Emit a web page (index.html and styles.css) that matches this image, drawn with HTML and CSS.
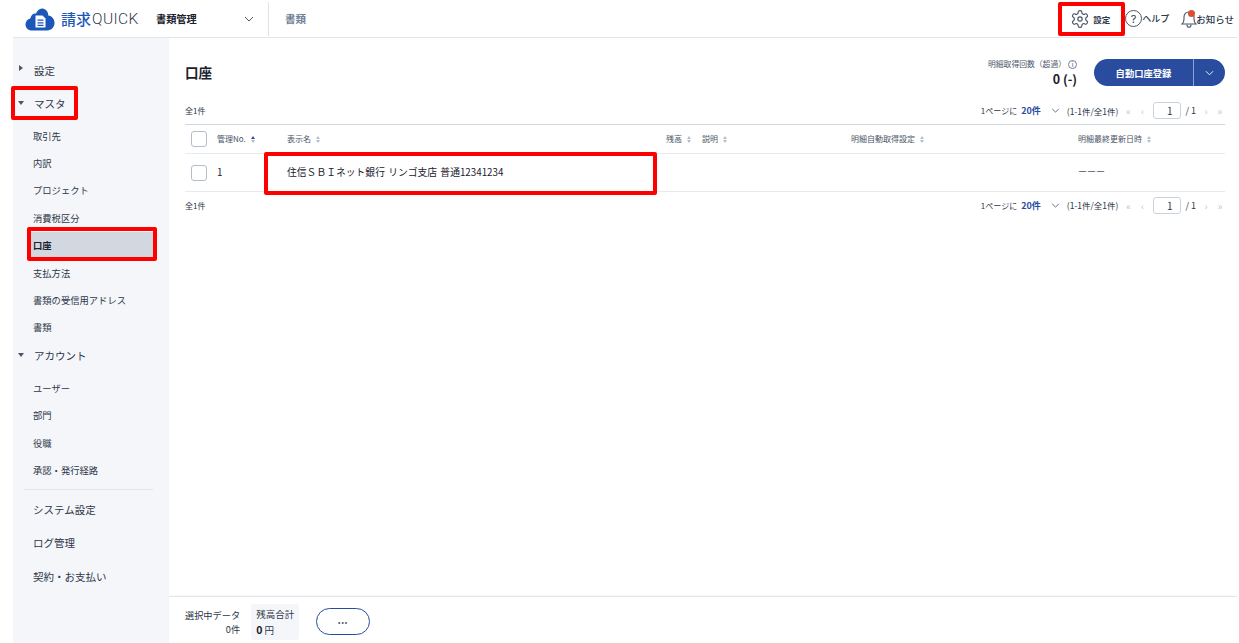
FILE: index.html
```html
<!DOCTYPE html>
<html lang="ja">
<head>
<meta charset="utf-8">
<title>口座</title>
<link rel="stylesheet" href="styles.css">
</head>
<body>
<div class="app">
  <header class="header">
    <div class="logo">
      <svg class="logo-mark" width="30" height="23" viewBox="0 0 30 23"><path fill="#1b57b8" d="M7 22.500C3 22.500 .5 19.800 .5 16.500c0-3 2-5.400 4.800-6C6 7 8.500 5 11 5.500 12.500 2.300 15-.2 18.500 .8c3.200.8 4.800 3.500 4.800 6.700 3.700.5 6.200 3.500 6.200 7.300 0 4.300-3 7.700-7.500 7.700z"/><path fill="#fff" d="M10.500 7.500h7l3 3v9h-10z"/><path fill="#1b57b8" d="M12.500 11.500h6v1.300h-6zM12.500 14.200h6v1.300h-6zM12.500 16.800h6v1.300h-6z"/></svg>
      <span class="logo-ja">請求</span><span class="logo-en">QUICK</span>
    </div>
    <div class="app-switch">
      <span class="app-name">書類管理</span>
      <svg class="chev" width="10" height="6" viewBox="0 0 10 6"><path d="M1 1l4 4 4-4" fill="none" stroke="#4a5568" stroke-width="1"/></svg>
    </div>
    <div class="crumb">書類</div>
    <nav class="top-actions">
      <div class="top-item top-gear">
        <svg width="20" height="20" viewBox="0 0 24 24" fill="none" stroke="#4a5568" stroke-width="1.400"><path d="M12.220 2h-.44a2 2 0 0 0-2 2v.18a2 2 0 0 1-1 1.730l-.43.25a2 2 0 0 1-2 0l-.15-.08a2 2 0 0 0-2.730.73l-.22.38a2 2 0 0 0 .73 2.730l.15.1a2 2 0 0 1 1 1.720v.51a2 2 0 0 1-1 1.740l-.15.09a2 2 0 0 0-.73 2.730l.22.38a2 2 0 0 0 2.730.73l.15-.08a2 2 0 0 1 2 0l.43.25a2 2 0 0 1 1 1.730V20a2 2 0 0 0 2 2h.44a2 2 0 0 0 2-2v-.18a2 2 0 0 1 1-1.730l.43-.25a2 2 0 0 1 2 0l.15.08a2 2 0 0 0 2.730-.73l.22-.39a2 2 0 0 0-.73-2.730l-.15-.08a2 2 0 0 1-1-1.740v-.5a2 2 0 0 1 1-1.740l.15-.09a2 2 0 0 0 .73-2.730l-.22-.38a2 2 0 0 0-2.730-.73l-.15.08a2 2 0 0 1-2 0l-.43-.25a2 2 0 0 1-1-1.730V4a2 2 0 0 0-2-2z"/><circle cx="12" cy="12" r="2.600"/></svg>
        <span>設定</span>
      </div>
      <div class="top-item top-help">
        <span class="help-icon">?</span><span>ヘルプ</span>
      </div>
      <div class="top-item top-bell">
        <span class="bell-wrap">
          <svg width="16" height="18" viewBox="0 0 16 18" fill="none" stroke="#4a5568" stroke-width="1.100"><path d="M1 14c1.500-1 2-2.500 2-5V7c0-3 2-5 5-5s5 2 5 5v2c0 2.500.5 4 2 5z"/><path d="M6 14.500c0 2 1 2.800 2 2.800s2-.8 2-2.800"/></svg>
          <i class="bell-dot"></i>
        </span>
        <span class="bell-label">お知らせ</span>
      </div>
    </nav>
  </header>
  <div class="body">
    <aside class="sidebar">
      <div class="side-top side-setting"><span class="tri tri-r"></span>設定</div>
      <div class="side-top side-master"><span class="tri tri-d"></span>マスタ</div>
      <ul class="side-sub">
        <li>取引先</li><li>内訳</li><li>プロジェクト</li><li>消費税区分</li>
        <li class="active">口座</li><li>支払方法</li><li>書類の受信用アドレス</li><li>書類</li>
      </ul>
      <div class="side-top side-account"><span class="tri tri-d"></span>アカウント</div>
      <ul class="side-sub side-sub2">
        <li>ユーザー</li><li>部門</li><li>役職</li><li>承認・発行経路</li>
      </ul>
      <div class="side-div"></div>
      <div class="side-link">システム設定</div>
      <div class="side-link">ログ管理</div>
      <div class="side-link">契約・お支払い</div>
    </aside>
    <main class="main">
      <div class="content">
        <div class="title-row">
          <h1>口座</h1>
          <div class="quota">
            <div class="quota-label">明細取得回数（超過）<span class="info">i</span></div>
            <div class="quota-val">0 (-)</div>
          </div>
          <div class="split-btn">
            <span class="split-main">自動口座登録</span>
            <span class="split-arrow"><svg width="9" height="6" viewBox="0 0 10 6"><path d="M1 1l4 4 4-4" fill="none" stroke="#fff" stroke-width="1"/></svg></span>
          </div>
        </div>
        <div class="pager-row">
          <span class="count">全1件</span>
          <div class="pager">
            <span>1ページに</span><b>20件</b>
            <svg class="pg-chev" width="9" height="5" viewBox="0 0 10 6"><path d="M1 1l4 4 4-4" fill="none" stroke="#4a5568" stroke-width="1"/></svg>
            <span class="pg-range">(1-1件/全1件)</span>
            <span class="pg-nav pg-first">«</span><span class="pg-nav">‹</span>
            <span class="pg-input">1</span><span class="pg-total">/ 1</span>
            <span class="pg-nav">›</span><span class="pg-nav">»</span>
          </div>
        </div>
        <div class="table">
          <div class="tr th">
            <div class="c-check"><span class="check"></span></div>
            <div class="c-no">管理No.<span class="sort sort-on"></span></div>
            <div class="c-name">表示名<span class="sort"></span></div>
            <div class="c-bal">残高<span class="sort"></span></div>
            <div class="c-desc">説明<span class="sort"></span></div>
            <div class="c-auto">明細自動取得設定<span class="sort"></span></div>
            <div class="c-date">明細最終更新日時<span class="sort"></span></div>
          </div>
          <div class="tr td">
            <div class="c-check"><span class="check"></span></div>
            <div class="c-no">1</div>
            <div class="c-name">住信ＳＢＩネット銀行 リンゴ支店 普通12341234</div>
            <div class="c-bal"></div>
            <div class="c-desc"></div>
            <div class="c-auto"></div>
            <div class="c-date">ーーー</div>
          </div>
        </div>
        <div class="pager-row pager-bottom">
          <span class="count">全1件</span>
          <div class="pager">
            <span>1ページに</span><b>20件</b>
            <svg class="pg-chev" width="9" height="5" viewBox="0 0 10 6"><path d="M1 1l4 4 4-4" fill="none" stroke="#4a5568" stroke-width="1"/></svg>
            <span class="pg-range">(1-1件/全1件)</span>
            <span class="pg-nav pg-first">«</span><span class="pg-nav">‹</span>
            <span class="pg-input">1</span><span class="pg-total">/ 1</span>
            <span class="pg-nav">›</span><span class="pg-nav">»</span>
          </div>
        </div>
      </div>
      <footer class="footer">
        <div class="sel">
          <div>選択中データ</div>
          <div>0件</div>
        </div>
        <div class="total">
          <div>残高合計</div>
          <div><b>0</b> 円</div>
        </div>
        <div class="more">•••</div>
      </footer>
    </main>
  </div>
</div>
<div class="mark mark-gear"></div>
<div class="mark mark-master"></div>
<div class="mark mark-acct"></div>
<div class="mark mark-row"></div>
</body>
</html>
```
FILE: styles.css
```css
* { box-sizing: border-box; }
html, body { margin: 0; height: 100%; background: #fff; overflow: hidden; }
body { font-family: "Noto Sans CJK JP", "Noto Sans", sans-serif; color: #2d3748; position: relative; }
ul { list-style: none; margin: 0; padding: 0; }
h1 { margin: 0; }

.app { width: 1237px; height: 643px; display: flex; flex-direction: column; }

.header { height: 38px; margin-left: 13px; border-bottom: 1px solid #e2e5ec; display: flex; align-items: center; flex: none; }
.logo { display: flex; align-items: center; width: 143px; padding-left: 12px; height: 37px; }
.logo-mark { flex: none; margin-top: 1px; }
.logo-ja { font-size: 15px; color: #1b57b8; margin-left: 6px; font-weight: 500; }
.logo-en { font-family: "Roboto", sans-serif; font-weight: 300; font-size: 15.500px; color: #333c49; letter-spacing: .4px; margin-left: 1px; }
.app-switch { width: 113px; display: flex; align-items: center; justify-content: space-between; height: 34px; padding-right: 14px; border-right: 1px solid #dfe2e8; }
.app-name { font-size: 10.200px; font-weight: 700; color: #1a202c; }
.chev { flex: none; }
.crumb { margin-left: 16px; font-size: 10.500px; font-weight: 700; color: #718096; }
.top-actions { margin-left: auto; display: flex; align-items: center; height: 37px; padding-right: 3px; }
.top-item { display: flex; align-items: center; font-size: 9.500px; font-weight: 500; color: #2d3748; }
.top-gear { gap: 3px; margin-right: 15px; }
.top-gear span { font-size: 8.500px; font-weight: 700; }
.top-help { margin-right: 12px; font-size: 9px; }
.help-icon { width: 17px; height: 17px; border: 1.200px solid #4a5568; border-radius: 50%; display: flex; align-items: center; justify-content: center; font-size: 11px; font-weight: 400; font-family: "Inter", sans-serif; }
.bell-wrap { position: relative; display: block; width: 16px; height: 18px; }
.bell-dot { position: absolute; left: 7px; top: 0; width: 7px; height: 7px; border-radius: 50%; background: #d9502e; }
.bell-label { margin-left: -1px; }

.body { flex: 1; display: flex; min-height: 0; margin-left: 13px; }
.sidebar { width: 156px; background: #f5f6fa; padding-top: 16px; flex: none; font-size: 10px; color: #2d3748; }
.side-top { height: 32px; display: flex; align-items: center; padding-left: 21px; position: relative; font-size: 10.500px; }
.side-setting { height: 33px; }
.side-master { height: 33px; }
.side-account { height: 30px; padding-bottom: 2px; }
.tri { position: absolute; left: 6px; top: 11px; width: 0; height: 0; }
.tri-r { border-left: 4px solid #4a5568; border-top: 3px solid transparent; border-bottom: 3px solid transparent; }
.tri-d { border-top: 4px solid #4a5568; border-left: 3px solid transparent; border-right: 3px solid transparent; left: 5px; top: 14px; }
.side-account .tri-d { top: 12px; }
.side-sub { padding-top: 2px; }
.side-sub li { height: 27.400px; display: flex; align-items: center; padding-left: 20px; font-size: 9.300px; }
.side-sub li.active { background: #d3d8e0; margin-left: 16px; padding-left: 4px; margin-right: 14px; font-weight: 700; color: #1a202c; }
.side-sub2 { padding-top: 3px; }
.side-div { height: 1px; background: #e2e5ec; margin: 5px 16px 3px 11px; }
.side-link { height: 33.500px; display: flex; align-items: center; padding-left: 20px; font-size: 10.500px; }

.main { flex: 1; display: flex; flex-direction: column; min-width: 0; }
.content { flex: 1; padding: 0 12px 0 16px; }
.title-row { height: 61px; display: flex; align-items: center; padding-top: 8px; }
.title-row h1 { font-size: 13.500px; font-weight: 700; color: #1a202c; margin-bottom: 2px; }
.quota { margin-left: auto; text-align: right; margin-right: 17px; }
.quota-label { font-size: 7.800px; color: #4a5568; display: flex; align-items: center; justify-content: flex-end; line-height: 12px; }
.info { width: 9px; height: 9px; border: 1px solid #718096; border-radius: 50%; font-size: 6px; line-height: 7px; text-align: center; margin-left: 2px; }
.quota-val { font-size: 12.500px; font-weight: 700; color: #1a202c; line-height: 17px; }
.split-btn { width: 131px; height: 27px; background: #294c9f; border-radius: 14px; display: flex; color: #fff; font-size: 9.300px; font-weight: 700; align-items: center; }
.split-main { width: 99px; text-align: center; }
.split-arrow { flex: 1; height: 100%; border-left: 1px solid #8fa3cf; display: flex; align-items: center; justify-content: center; }

.pager-row { height: 25px; display: flex; align-items: center; justify-content: space-between; font-size: 8px; color: #2d3748; padding-bottom: 2px; }
.count { font-size: 8px; }
.pager { display: flex; align-items: center; font-size: 8px; height: 17px; margin-right: -2px; }
.pager b { color: #294c9f; margin-left: 4px; font-size: 9px; }
.pg-chev { margin: 0 7px 0 10px; }
.pg-range { font-size: 8.500px; }
.pg-nav { color: #c3c8d2; width: 14px; text-align: center; font-size: 10px; }
.pg-first { margin-left: 3px; }
.pg-input { width: 28px; height: 17px; border: 1px solid #cbd2dc; border-radius: 3px; text-align: right; padding-right: 8px; font-size: 10px; line-height: 15px; margin: 0 4px 0 4px; }
.pg-total { font-size: 9px; margin-right: 3px; }
.pager-bottom { height: 26px; padding-bottom: 0; }

.table { border-top: 1px solid #d3d8e0; }
.tr { display: flex; align-items: center; border-bottom: 1px solid #e8eaef; }
.th { height: 29px; font-size: 8px; color: #4a5568; }
.td { height: 38px; font-size: 9.800px; color: #1a202c; word-spacing: 1px; }
.c-check { width: 32px; padding-left: 6px; display: flex; }
.check { width: 16px; height: 16px; border: 1px solid #b4bdcb; border-radius: 3px; background: #fff; }
.c-no, .c-name, .c-bal, .c-desc, .c-auto, .c-date { padding-bottom: 2px; }
.c-no { width: 70px; }
.c-name { width: 379px; }
.c-bal { width: 36px; }
.c-desc { width: 149px; }
.c-auto { width: 227px; }
.c-date { flex: 1; }
.td .c-date { color: #4a5568; font-size: 9px; }
.sort { display: inline-block; width: 0; height: 0; margin-left: 5px; border-left: 2px solid transparent; border-right: 2px solid transparent; border-bottom: 3px solid #b4bdcb; position: relative; top: -3px; }
.sort::after { content: ""; position: absolute; left: -2px; top: 4px; border-left: 2px solid transparent; border-right: 2px solid transparent; border-top: 3px solid #b4bdcb; }
.sort-on { border-bottom-color: #294c9f; }

.footer { height: 47px; border-top: 1px solid #e2e5ec; box-shadow: 0 -1px 2px rgba(0,0,0,.03); display: flex; align-items: center; padding: 3px 0 0 16px; flex: none; font-size: 9.200px; color: #2d3748; }
.sel { text-align: right; line-height: 14px; margin-right: 11px; }
.total { background: #f5f6fa; border-radius: 3px; padding: 3px 5px 0; height: 36px; line-height: 15px; width: 48px; font-size: 9.500px; }
.total b { font-size: 10.500px; color: #1a202c; }
.more { margin-left: 17px; width: 54px; height: 27px; border: 1px solid #294c9f; border-radius: 14px; display: flex; align-items: center; justify-content: center; font-size: 7px; letter-spacing: 1px; color: #4a5568; }

.mark { position: absolute; border: 4px solid #ff0000; border-radius: 2px; }
.mark-gear { left: 1058px; top: 2px; width: 67px; height: 34px; }
.mark-master { left: 11px; top: 86px; width: 67px; height: 34px; }
.mark-acct { left: 27px; top: 227px; width: 130px; height: 34px; }
.mark-row { left: 264px; top: 152px; width: 393px; height: 43px; }
```
